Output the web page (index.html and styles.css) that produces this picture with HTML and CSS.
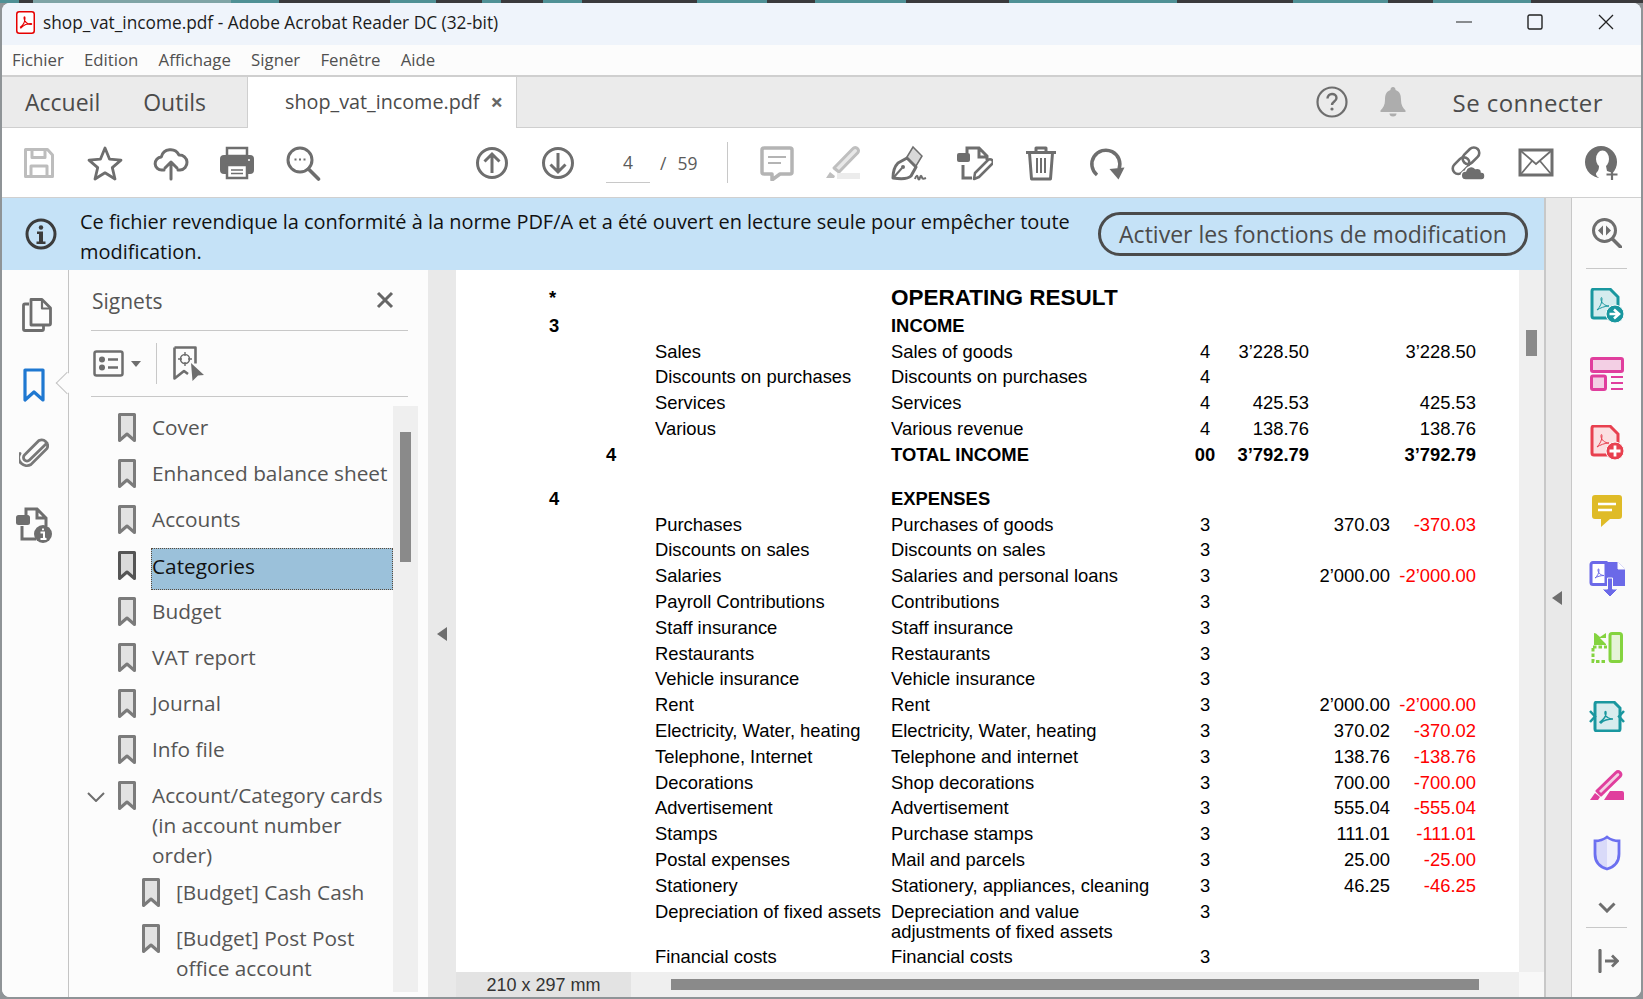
FILE: index.html
```html
<!DOCTYPE html>
<html lang="fr">
<head>
<meta charset="utf-8">
<title>shop_vat_income.pdf - Adobe Acrobat Reader DC (32-bit)</title>
<link rel="stylesheet" href="styles.css">
</head>
<body>
<svg class="defs" width="0" height="0" aria-hidden="true">
  <symbol id="bm" viewBox="0 0 18 29"><path d="M1.500 1.500h15v26L9 21l-7.500 6.500z" fill="currentColor" fill-opacity=".2" stroke="currentColor" stroke-width="3" stroke-linejoin="round"/></symbol>
</svg>
<div class="window">
  <header class="titlebar">
    <svg class="app-logo" width="19" height="23" viewBox="0 0 19 23"><rect x=".75" y=".75" width="17.500" height="21.500" rx="2.500" fill="#fff" stroke="#e60000" stroke-width="1.500"/><path d="M4 16.500c3-2 5-6 5-9.500 0-1.500-1-1.500-1 0 0 4 4 6.500 7 6.500 1 0 1-1 0-1-3.500 0-8 2-10.500 5" fill="none" stroke="#e60000" stroke-width="1.100"/></svg>
    <span class="title-text">shop_vat_income.pdf - Adobe Acrobat Reader DC (32-bit)</span>
    <div class="win-btns">
      <svg width="16" height="16" viewBox="0 0 16 16"><path d="M0 8h16" stroke="#222" stroke-width="1.200"/></svg>
      <svg width="16" height="16" viewBox="0 0 16 16"><rect x="1" y="1" width="14" height="14" rx="1.500" fill="none" stroke="#222" stroke-width="1.400"/></svg>
      <svg width="16" height="16" viewBox="0 0 16 16"><path d="M1 1l14 14M15 1L1 15" stroke="#222" stroke-width="1.300"/></svg>
    </div>
  </header>
  <nav class="menubar">
    <span>Fichier</span><span>Edition</span><span>Affichage</span><span>Signer</span><span>Fenêtre</span><span>Aide</span>
  </nav>
  <div class="tabbar">
    <span class="tab-link tab-home">Accueil</span>
    <span class="tab-link tab-tools">Outils</span>
    <div class="tab-doc"><span>shop_vat_income.pdf</span><span class="tab-x">×</span></div>
    <div class="tab-right">
      <svg class="ic-help" width="32" height="32" viewBox="0 0 32 32"><circle cx="16" cy="16" r="14.500" fill="none" stroke="#6e6e6e" stroke-width="2.200"/><path d="M11.500 12.500c0-6 9-6 9-.5 0 3.500-4.500 3.500-4.500 7" fill="none" stroke="#6e6e6e" stroke-width="2.400"/><circle cx="16" cy="23" r="1.600" fill="#6e6e6e"/></svg>
      <svg class="ic-bell" width="26" height="32" viewBox="0 0 26 32"><path d="M13 1a2.500 2.500 0 0 1 2.500 3C20 5.500 21 9 21 14c0 5 2 8 4.500 10.500v1.500H.5v-1.500C3 22 5 19 5 14 5 9 6 5.500 10.500 4A2.500 2.500 0 0 1 13 1zM9.500 27.500h7a3.500 3 0 0 1-7 0z" fill="#adadad"/></svg>
      <span class="signin">Se connecter</span>
    </div>
  </div>
  <div class="toolbar">
    <span class="tb"><svg width="36" height="36" viewBox="0 0 36 36" fill="none" stroke="#bdbdbd" stroke-width="3" stroke-linejoin="round"><path d="M4.500 4.500h22l5 5.500v21.500h-27z"/><path d="M11 4.500v8h13v-8M10 31v-10h16v10"/></svg></span>
    <span class="tb"><svg width="36" height="36" viewBox="0 0 36 36"><path d="M18 3l4.600 11.200 11.400.9-8.700 7.500 2.700 11.400-10-6.200-10 6.200 2.700-11.400L2 15.100l11.400-.9z" fill="none" stroke="#6e6e6e" stroke-width="2.800" stroke-linejoin="round"/></svg></span>
    <span class="tb"><svg width="36" height="36" viewBox="0 0 36 36" fill="none" stroke="#6e6e6e" stroke-width="3" stroke-linecap="round" stroke-linejoin="round"><path d="M11 25H9a6.500 6.500 0 0 1-.7-13A9.500 9.500 0 0 1 26 10a7.500 7.500 0 0 1 1 15h-2"/><path d="M18 34V17M12 23l6-6 6 6"/></svg></span>
    <span class="tb"><svg width="36" height="36" viewBox="0 0 36 36"><path d="M8 3h20v8H8z" fill="none" stroke="#6e6e6e" stroke-width="2.500"/><rect x="1" y="10" width="34" height="19" rx="4" fill="#6e6e6e"/><rect x="8" y="20" width="20" height="13" fill="#fff" stroke="#6e6e6e" stroke-width="2.500"/><path d="M12 25h12M12 28.500h12" stroke="#6e6e6e" stroke-width="1.600"/><circle cx="30" cy="15" r="1" fill="#fff"/></svg></span>
    <span class="tb"><svg width="36" height="36" viewBox="0 0 36 36" fill="none" stroke="#6e6e6e"><circle cx="15" cy="15" r="12" stroke-width="3"/><path d="M23.500 24l10 10" stroke-width="3.600" stroke-linecap="round"/><path d="M9.500 14.500h2M14 14.500h2M18.500 14.500h2" stroke-width="2.200"/></svg></span>
    <span class="tb tb-nav"><svg width="36" height="36" viewBox="0 0 36 36" fill="none" stroke="#6e6e6e" stroke-width="3"><circle cx="18" cy="18" r="14.500"/><path d="M18 28V9M10.500 16.500L18 9l7.500 7.500"/></svg></span>
    <span class="tb"><svg width="36" height="36" viewBox="0 0 36 36" fill="none" stroke="#6e6e6e" stroke-width="3"><circle cx="18" cy="18" r="14.500"/><path d="M18 8v19M10.500 19.500L18 27l7.500-7.500"/></svg></span>
    <div class="pager"><span class="pg-cur">4</span><span class="pg-sl">/</span><span class="pg-tot">59</span></div>
    <span class="tb-sep"></span>
    <span class="tb"><svg width="36" height="36" viewBox="0 0 36 36"><path d="M5 3h26a2 2 0 0 1 2 2v22a2 2 0 0 1-2 2H21l-8 6v-6H5a2 2 0 0 1-2-2V5a2 2 0 0 1 2-2z" fill="none" stroke="#b4b4b4" stroke-width="3.500" stroke-linejoin="round"/><path d="M9 12h18M9 18h13" stroke="#b4b4b4" stroke-width="2"/></svg></span>
    <span class="tb"><svg width="36" height="36" viewBox="0 0 36 36"><path d="M9 23L28 3.500a3 3 0 0 1 4.500 0 3 3 0 0 1 0 4.500L14 27z" fill="#e8e8e8" stroke="#bfbfbf" stroke-width="3" stroke-linejoin="round"/><path d="M1 33l4-6 5 4-1 2z" fill="#bfbfbf"/><rect x="12" y="28" width="23" height="6" fill="#ececec"/></svg></span>
    <span class="tb"><svg width="36" height="36" viewBox="0 0 36 36"><path d="M2 33c0-6 2-12 5-15l9-5 9 9-5 9c-3 3-11 3-18 2z" fill="none" stroke="#6e6e6e" stroke-width="3" stroke-linejoin="round"/><path d="M16 12l6-10 9 9-6 10z" fill="#d8d8d8" stroke="#6e6e6e" stroke-width="1.500"/><path d="M3 32l8-9" stroke="#6e6e6e" stroke-width="2"/><circle cx="12" cy="22" r="2" fill="#6e6e6e"/><path d="M24 34c1-4 2.500-4 3-1 .5 2 1.500 2 2-.5.500-2.500 1.500-2.500 2 0 .3 1.500 1.500 1.500 4 .5" fill="none" stroke="#6e6e6e" stroke-width="2"/></svg></span>
    <span class="tb"><svg width="36" height="36" viewBox="0 0 36 36" fill="none" stroke="#6e6e6e" stroke-width="3"><rect x="0" y="8" width="13" height="9" rx="2" fill="#6e6e6e" stroke="none"/><path d="M10 8V3h12l8 8v4M22 3v9h8M6 20v13h9"/><path d="M17 34l1-6 13-13a2.500 2.500 0 0 1 4 4L22 32z" stroke-width="2.500" stroke-linejoin="round"/></svg></span>
    <span class="tb"><svg width="36" height="36" viewBox="0 0 36 36" fill="none" stroke="#6e6e6e" stroke-width="3" stroke-linejoin="round"><path d="M3 7.500h30M13 7V3h10v4M6.500 8l2 26h19l2-26"/><path d="M14 13v15M18 13v15M22 13v15" stroke-width="2"/></svg></span>
    <span class="tb"><svg width="36" height="36" viewBox="0 0 36 36" fill="none" stroke="#6e6e6e" stroke-width="3.500"><path d="M8 30A14 14 0 1 1 30 24"/><path d="M20.500 24l15-1.500-6 12z" fill="#6e6e6e" stroke="none"/></svg></span>
    <div class="tb-end">
      <span class="tb"><svg class="ic-link" width="38" height="36" viewBox="0 0 38 36"><g fill="none" stroke="#6e6e6e" stroke-width="2.600" transform="rotate(-45 17 15)"><rect x="0" y="10" width="19" height="11" rx="5.500"/><rect x="14" y="10" width="19" height="11" rx="5.500"/></g><path d="M17 35a4.500 4.500 0 0 1-.5-9c1-4.500 7-6 10-2.500 3.500-1 6 1 6 3.500 2.500 0 3.500 2 3.500 4s-1.500 4-3.500 4z" fill="#6e6e6e" stroke="#fff" stroke-width="1.500"/></svg></span>
      <span class="tb"><svg width="36" height="36" viewBox="0 0 36 36" fill="none" stroke="#6e6e6e"><rect x="2" y="5" width="32" height="25" stroke-width="3"/><path d="M3 6l15 13L33 6M3 29l11-13M33 29L22 16" stroke-width="1.800"/></svg></span>
      <span class="tb"><svg width="36" height="36" viewBox="0 0 36 36"><circle cx="17" cy="17" r="16" fill="#6e6e6e"/><ellipse cx="18.500" cy="14" rx="6.500" ry="8.500" fill="#fff"/><path d="M15 21h7l1 5 9 3-6 5H17c-2-1-5-3-5-5 0-2 3-2 3-8z" fill="#fff"/><path d="M28 24v11M22.500 29.500h11" stroke="#6e6e6e" stroke-width="2.200"/></svg></span>
    </div>
  </div>
  <div class="content">
    <div class="main-col">
      <div class="banner">
        <svg class="ic-info" width="32" height="32" viewBox="0 0 32 32"><circle cx="16" cy="16" r="14" fill="none" stroke="#3c3c3c" stroke-width="3"/><circle cx="16" cy="9.500" r="2.200" fill="#3c3c3c"/><path d="M12 13.500h6v10h2.500v2.500h-9v-2.500H14v-7.500h-2z" fill="#3c3c3c"/></svg>
        <p class="banner-text">Ce fichier revendique la conformité à la norme PDF/A et a été ouvert en lecture seule pour empêcher toute modification.</p>
        <span class="banner-btn">Activer les fonctions de modification</span>
      </div>
      <div class="work">
        <aside class="rail">
          <svg class="rail-ic ic-pages" width="30" height="34" viewBox="0 0 30 34" fill="none" stroke="#6e6e6e" stroke-width="2.800" stroke-linejoin="round"><path d="M7 6H3a1.500 1.500 0 0 0-1.500 1.500V31A1.500 1.500 0 0 0 3 32.500h17a1.500 1.500 0 0 0 1.500-1.500v-4"/><path d="M9 1.500h11l8.500 8.500v15.500a1.500 1.500 0 0 1-1.500 1.500H9z"/><path d="M20 2v8.500h8" stroke-width="2.200"/></svg>
          <svg class="rail-ic ic-mark" width="22" height="35" viewBox="0 0 22 35"><path d="M2 2h18v30l-9-8-9 8z" fill="none" stroke="#1f78d1" stroke-width="3.200" stroke-linejoin="round"/></svg>
          <svg class="rail-ic ic-clip" width="30" height="32" viewBox="0 0 30 32"><path d="M28 6.500L10.500 23.500a3.500 3.500 0 0 1-5-5L20 4a6 6 0 0 1 8 8L12 28a8 8 0 0 1-11-11" transform="translate(0 .5)" fill="none" stroke="#787878" stroke-width="2.800" stroke-linecap="round"/></svg>
          <svg class="rail-ic ic-docinfo" width="36" height="36" viewBox="0 0 36 36"><g fill="none" stroke="#6e6e6e" stroke-width="3"><path d="M10 8V2h11l9 9v8M21 2v9h9M6 19v13h14"/></g><rect x="0" y="8" width="14" height="10" rx="2.500" fill="#6e6e6e"/><circle cx="27" cy="27" r="9" fill="#6e6e6e"/><path d="M27 21.500v1.800M24.500 25.500H28v6h1.500M24.500 32h6" fill="none" stroke="#fff" stroke-width="2"/></svg>
          <span class="rail-notch"></span>
        </aside>
        <section class="panel">
          <div class="panel-head">
            <span class="panel-title">Signets</span>
            <svg width="18" height="18" viewBox="0 0 18 18"><path d="M2 2l14 14M16 2L2 16" stroke="#666" stroke-width="3"/></svg>
          </div>
          <div class="panel-tools">
            <svg width="31" height="27" viewBox="0 0 31 27"><rect x="1.500" y="1.500" width="28" height="24" rx="2" fill="none" stroke="#6e6e6e" stroke-width="2.500"/><circle cx="9" cy="9.500" r="3" fill="#6e6e6e"/><circle cx="9" cy="17.500" r="3" fill="#6e6e6e"/><path d="M15 9.500h10M15 17.500h10" stroke="#6e6e6e" stroke-width="2.500"/></svg>
            <span class="caret"></span>
            <span class="panel-sep"></span>
            <svg width="31" height="35" viewBox="0 0 31 35"><path d="M1.500 1.500h21v16M1.500 1.500v31l9.500-7.500 4 3" fill="none" stroke="#6e6e6e" stroke-width="2.600" stroke-linejoin="round"/><circle cx="12" cy="13" r="4.500" fill="none" stroke="#6e6e6e" stroke-width="1.600"/><path d="M12 6v4M12 16v4M5 13h4M15 13h4" stroke="#6e6e6e" stroke-width="1.400"/><path d="M18 17l13 12-6 .5-5.500 5.500z" fill="#6e6e6e"/></svg>
          </div>
          <div class="bm-area">
            <ul class="bm-list">
              <li class="bm"><span class="tw"></span><svg class="bm-ic"><use href="#bm"/></svg><span class="bm-t">Cover</span></li>
              <li class="bm"><span class="tw"></span><svg class="bm-ic"><use href="#bm"/></svg><span class="bm-t">Enhanced balance sheet</span></li>
              <li class="bm"><span class="tw"></span><svg class="bm-ic"><use href="#bm"/></svg><span class="bm-t">Accounts</span></li>
              <li class="bm bm-sel"><span class="tw"></span><svg class="bm-ic"><use href="#bm"/></svg><span class="bm-t">Categories</span></li>
              <li class="bm"><span class="tw"></span><svg class="bm-ic"><use href="#bm"/></svg><span class="bm-t">Budget</span></li>
              <li class="bm"><span class="tw"></span><svg class="bm-ic"><use href="#bm"/></svg><span class="bm-t">VAT report</span></li>
              <li class="bm"><span class="tw"></span><svg class="bm-ic"><use href="#bm"/></svg><span class="bm-t">Journal</span></li>
              <li class="bm"><span class="tw"></span><svg class="bm-ic"><use href="#bm"/></svg><span class="bm-t">Info file</span></li>
              <li class="bm bm-open"><span class="tw"><svg width="18" height="10" viewBox="0 0 18 10"><path d="M1 1l8 8 8-8" fill="none" stroke="#6e6e6e" stroke-width="2"/></svg></span><svg class="bm-ic"><use href="#bm"/></svg><span class="bm-t">Account/Category cards (in account number order)</span></li>
              <li class="bm bm-sub"><span class="tw"></span><svg class="bm-ic"><use href="#bm"/></svg><span class="bm-t">[Budget] Cash Cash</span></li>
              <li class="bm bm-sub"><span class="tw"></span><svg class="bm-ic"><use href="#bm"/></svg><span class="bm-t">[Budget] Post Post office account</span></li>
            </ul>
            <div class="bm-track"><span class="bm-thumb"></span></div>
          </div>
        </section>
        <div class="gutter"><span class="arrow"></span></div>
        <section class="viewer">
          <div class="viewer-top">
            <div class="page">
              <div class="r r-h"><b>*</b><span></span><span></span><b class="big">OPERATING RESULT</b></div>
              <div class="r"><b>3</b><span></span><span></span><b>INCOME</b></div>
              <div class="r"><span></span><span></span><span>Sales</span><span>Sales of goods</span><span class="c">4</span><span class="n">3’228.50</span><span></span><span class="n">3’228.50</span></div>
              <div class="r"><span></span><span></span><span>Discounts on purchases</span><span>Discounts on purchases</span><span class="c">4</span></div>
              <div class="r"><span></span><span></span><span>Services</span><span>Services</span><span class="c">4</span><span class="n">425.53</span><span></span><span class="n">425.53</span></div>
              <div class="r"><span></span><span></span><span>Various</span><span>Various revenue</span><span class="c">4</span><span class="n">138.76</span><span></span><span class="n">138.76</span></div>
              <div class="r r-b"><span></span><span>4</span><span></span><span>TOTAL INCOME</span><span class="c">00</span><span class="n">3’792.79</span><span></span><span class="n">3’792.79</span></div>
              <div class="r-gap"></div>
              <div class="r"><b>4</b><span></span><span></span><b>EXPENSES</b></div>
              <div class="r"><span></span><span></span><span>Purchases</span><span>Purchases of goods</span><span class="c">3</span><span></span><span class="n">370.03</span><span class="n neg">-370.03</span></div>
              <div class="r"><span></span><span></span><span>Discounts on sales</span><span>Discounts on sales</span><span class="c">3</span></div>
              <div class="r"><span></span><span></span><span>Salaries</span><span>Salaries and personal loans</span><span class="c">3</span><span></span><span class="n">2’000.00</span><span class="n neg">-2’000.00</span></div>
              <div class="r"><span></span><span></span><span>Payroll Contributions</span><span>Contributions</span><span class="c">3</span></div>
              <div class="r"><span></span><span></span><span>Staff insurance</span><span>Staff insurance</span><span class="c">3</span></div>
              <div class="r"><span></span><span></span><span>Restaurants</span><span>Restaurants</span><span class="c">3</span></div>
              <div class="r"><span></span><span></span><span>Vehicle insurance</span><span>Vehicle insurance</span><span class="c">3</span></div>
              <div class="r"><span></span><span></span><span>Rent</span><span>Rent</span><span class="c">3</span><span></span><span class="n">2’000.00</span><span class="n neg">-2’000.00</span></div>
              <div class="r"><span></span><span></span><span>Electricity, Water, heating</span><span>Electricity, Water, heating</span><span class="c">3</span><span></span><span class="n">370.02</span><span class="n neg">-370.02</span></div>
              <div class="r"><span></span><span></span><span>Telephone, Internet</span><span>Telephone and internet</span><span class="c">3</span><span></span><span class="n">138.76</span><span class="n neg">-138.76</span></div>
              <div class="r"><span></span><span></span><span>Decorations</span><span>Shop decorations</span><span class="c">3</span><span></span><span class="n">700.00</span><span class="n neg">-700.00</span></div>
              <div class="r"><span></span><span></span><span>Advertisement</span><span>Advertisement</span><span class="c">3</span><span></span><span class="n">555.04</span><span class="n neg">-555.04</span></div>
              <div class="r"><span></span><span></span><span>Stamps</span><span>Purchase stamps</span><span class="c">3</span><span></span><span class="n">111.01</span><span class="n neg">-111.01</span></div>
              <div class="r"><span></span><span></span><span>Postal expenses</span><span>Mail and parcels</span><span class="c">3</span><span></span><span class="n">25.00</span><span class="n neg">-25.00</span></div>
              <div class="r"><span></span><span></span><span>Stationery</span><span>Stationery, appliances, cleaning</span><span class="c">3</span><span></span><span class="n">46.25</span><span class="n neg">-46.25</span></div>
              <div class="r r-wrap"><span></span><span></span><span>Depreciation of fixed assets</span><span>Depreciation and value<br>adjustments of fixed assets</span><span class="c">3</span></div>
              <div class="r"><span></span><span></span><span>Financial costs</span><span>Financial costs</span><span class="c">3</span></div>
            </div>
            <div class="vscroll"><span class="vthumb"></span></div>
          </div>
          <div class="viewer-bottom">
            <span class="page-size">210 x 297 mm</span>
            <div class="hscroll"><span class="hthumb"></span></div>
            <span class="corner"></span>
          </div>
        </section>
      </div>
    </div>
    <div class="gutter gutter-r"><span class="arrow"></span></div>
    <aside class="tools">
      <div class="tools-head"><svg width="30" height="30" viewBox="0 0 30 30"><circle cx="12.500" cy="12.500" r="11" fill="none" stroke="#6e6e6e" stroke-width="3"/><path d="M20.500 21l8 8" stroke="#6e6e6e" stroke-width="3.500" stroke-linecap="round"/><path d="M11 7.500v10l-5-5zM14 7.500v10l5-5z" fill="#6e6e6e"/></svg></div>
      <div class="tool"><svg width="34" height="35" viewBox="0 0 34 35"><path d="M2 3a2 2 0 0 1 2-2h16l8 8v19a2 2 0 0 1-2 2H4a2 2 0 0 1-2-2z" fill="#d4ecee" stroke="#19979f" stroke-width="3"/><path d="M7 22c3-3 5-7 5-11 0-2-1-2-1 0 0 4 4 7 8 7-4 0-9 2-12 4z" fill="none" stroke="#19979f" stroke-width="1"/><circle cx="25" cy="26" r="9" fill="#19979f" stroke="#fafafa" stroke-width="1"/><path d="M19.500 26h8M24 21.500l5 4.500-5 4.500" fill="none" stroke="#fff" stroke-width="2.600"/></svg></div>
      <div class="tool"><svg width="34" height="34" viewBox="0 0 34 34" fill="#f3cfe4" stroke="#e03e9d" stroke-width="3"><rect x="1.500" y="1.500" width="31" height="13" rx="1.500"/><rect x="1.500" y="19" width="14" height="13.500" rx="1.500"/><path d="M21 20h12M21 26h12M21 32h12" stroke-width="1.800" fill="none"/></svg></div>
      <div class="tool"><svg width="34" height="35" viewBox="0 0 34 35"><path d="M2 3a2 2 0 0 1 2-2h16l8 8v19a2 2 0 0 1-2 2H4a2 2 0 0 1-2-2z" fill="#fbdfe1" stroke="#e8404f" stroke-width="3"/><path d="M7 22c3-3 5-7 5-11 0-2-1-2-1 0 0 4 4 7 8 7-4 0-9 2-12 4z" fill="none" stroke="#e8404f" stroke-width="1"/><circle cx="25" cy="26" r="9" fill="#e8404f" stroke="#fafafa" stroke-width="1"/><path d="M25 20.500v11M19.500 26h11" stroke="#fff" stroke-width="2.800"/></svg></div>
      <div class="tool"><svg width="30" height="32" viewBox="0 0 30 32"><path d="M3 0h24a3 3 0 0 1 3 3v18a3 3 0 0 1-3 3H18l-9 8v-8H3a3 3 0 0 1-3-3V3a3 3 0 0 1 3-3z" fill="#dfbb27"/><path d="M6 9h18M6 15h14" stroke="#fff" stroke-width="2.600"/></svg></div>
      <div class="tool"><svg width="36" height="36" viewBox="0 0 36 36"><path d="M18 1h11l7 7v17H18z" fill="#6b69e8"/><path d="M29 1v7h7" fill="#fff" stroke="#fafafa" stroke-width="1"/><path d="M2 3.500a2 2 0 0 1 2-2h13v22H4a2 2 0 0 1-2-2z" fill="#fff" stroke="#6b69e8" stroke-width="3"/><path d="M6 17c2.500-2 4-5 4-8 0-1.500-1-1.500-1 0 0 3 3 5.500 6 5.500-3 0-7 1-9 2.500z" fill="none" stroke="#6b69e8"/><path d="M18.500 17h5v11H29l-8 8-8-8h5.500z" fill="#6b69e8" stroke="#fafafa"/></svg></div>
      <div class="tool"><svg width="32" height="31" viewBox="0 0 32 31"><rect x="19" y="1.500" width="11.500" height="28" rx="2" fill="#e6f3d8" stroke="#84d33f" stroke-width="3"/><path d="M2 16v13.500h14M2 15h14" fill="none" stroke="#84d33f" stroke-width="3" stroke-dasharray="3.500 2"/><path d="M15 1v5H9l6 6v1H3V1l2 .5L9 5z" fill="#84d33f"/></svg></div>
      <div class="tool"><svg width="36" height="31" viewBox="0 0 36 31"><path d="M6 3a2 2 0 0 1 2-2h17l6 6v21a2 2 0 0 1-2 2H8a2 2 0 0 1-2-2z" fill="#d7ecee" stroke="#19979f" stroke-width="3"/><path d="M11 21c3-2 6-5 6-9 0-2-1-2-1 0 0 4 4 6 8 6-4 0-9 1-12 4z" fill="none" stroke="#19979f" stroke-width="1.500"/><path d="M1 10l5 5.500-5 5.500" fill="none" stroke="#19979f" stroke-width="2.500"/><path d="M35 10l-5 5.500 5 5.500" fill="none" stroke="#19979f" stroke-width="2.500"/></svg></div>
      <div class="tool"><svg width="34" height="30" viewBox="0 0 34 30"><path d="M7 21L26 2.500a3 3 0 0 1 4 0 3 3 0 0 1 0 4L11 25z" fill="#f3cfe4" stroke="#e03e9d" stroke-width="3" stroke-linejoin="round"/><path d="M0 30l5-7 5 4-2 3z" fill="#e03e9d"/><path d="M14 30l6-9h12a2 2 0 0 1 2 2v7z" fill="#e03e9d"/></svg></div>
      <div class="tool"><svg width="28" height="36" viewBox="0 0 28 36"><path d="M14 3c-4 3-8 4-11 4v12c0 7 4 12 11 14z" fill="#d9daf9"/><path d="M14 3c4 3 8 4 11 4v12c0 7-4 12-11 14z" fill="#eeeefc"/><path d="M14 2c4 3 8 4 12 4v13c0 8-5 13-12 15C7 32 2 27 2 19V6c4 0 8-1 12-4z" fill="none" stroke="#6b6ff0" stroke-width="2.800"/></svg></div>
      <div class="tools-more"><svg width="18" height="11" viewBox="0 0 18 11"><path d="M1.500 1.500L9 9l7.500-7.500" fill="none" stroke="#6e6e6e" stroke-width="3"/></svg></div>
      <div class="tools-foot"><svg width="21" height="24" viewBox="0 0 21 24"><path d="M2 1.500v21" stroke="#6e6e6e" stroke-width="3.200" stroke-linecap="round"/><path d="M7 12h12M14 6.500l5.500 5.500L14 17.500" fill="none" stroke="#6e6e6e" stroke-width="2.800"/></svg></div>
    </aside>
  </div>
</div>
</body>
</html>
```
FILE: styles.css
```css
* { box-sizing: border-box; }
html, body { height: 100%; }
body {
  margin: 0;
  overflow: hidden;
  font-family: "Open Sans", "Noto Sans", sans-serif;
  background-color: #8f9497;
  background-image: linear-gradient(90deg, #4f9095 0 19px, #3a3a3c 19px 33px, #7fa4a6 33px 231px, #4f9095 231px 279px, #3a3a3c 279px 390px, #4f9095 390px 436px, #3a3a3c 436px 482px, #4f9095 482px 501px, #3a3a3c 501px 543px, #4f9095 543px 582px, #3a3a3c 582px 697px, #4f9095 697px 767px, #3a3a3c 767px 815px, #4f9095 815px 906px, #3a3a3c 906px 1009px, #4f9095 1009px 1177px, #3a3a3c 1177px 1293px, #4f9095 1293px 1388px, #3a3a3c 1388px 1433px, #4f9095 1433px 1531px, #3a3a3c 1531px 1643px);
  background-size: 100% 3px;
  background-repeat: no-repeat;
}
.defs { position: absolute; }
.window {
  margin: 3px 2px 2px;
  height: 994px;
  border-radius: 8px;
  overflow: hidden;
  display: flex;
  flex-direction: column;
  background: #fff;
}
.titlebar {
  height: 42px;
  flex: none;
  display: flex;
  align-items: center;
  padding: 0 27px 4px 14px;
  background: #eff4fb;
  color: #1c1c1c;
  font-size: 17.300px;
}
.app-logo { margin-right: 8px; }
.win-btns { margin-left: auto; display: flex; gap: 55px; }
.menubar {
  height: 30px;
  flex: none;
  display: flex;
  align-items: center;
  background: #fcfcfc;
  padding: 0 0 2px 10px;
  gap: 20.200px;
  color: #505050;
  font-size: 16.800px;
}
.tabbar {
  height: 53px;
  flex: none;
  display: flex;
  align-items: center;
  background: #ebebeb;
  border-top: 2px solid #cfcfcf;
  border-bottom: 1px solid #cfcfcf;
  color: #4b4b4b;
  font-size: 23px;
}
.tab-home { margin-left: 23px; }
.tab-tools { margin-left: 43px; }
.tab-doc {
  align-self: stretch;
  margin: 0 0 -1px 41px;
  width: 270px;
  background: #fff;
  border-left: 1px solid #cfcfcf;
  border-right: 1px solid #cfcfcf;
  display: flex;
  align-items: center;
  padding: 0 0 3px 37px;
  font-size: 19.750px;
}
.tab-x { margin-left: 11px; font-weight: 700; color: #666; font-size: 22px; }
.tab-right { margin-left: auto; display: flex; align-items: center; padding-right: 38px; }
.ic-bell { margin-left: 32px; }
.signin { margin-left: 47px; font-size: 24px; font-weight: 500; letter-spacing: .45px; }
.toolbar {
  height: 70px;
  flex: none;
  display: flex;
  align-items: center;
  padding-left: 4px;
  background: #fff;
  border-bottom: 1px solid #d0d0d0;
}
.tb { width: 66px; height: 36px; flex: none; display: flex; justify-content: center; }
.tb-nav { margin-left: 123px; }
.ic-link { flex: none; margin-left: -5px; }
.pager { width: 136px; flex: none; display: flex; align-items: center; color: #5a5a5a; font-size: 17.500px; height: 41px; }
.pg-cur { width: 44px; margin-left: 15px; align-self: stretch; display: flex; align-items: center; justify-content: center; border-bottom: 1px solid #c8c8c8; }
.pg-sl { margin-left: 10px; }
.pg-tot { margin-left: 11px; }
.tb-sep { width: 1px; height: 41px; background: #c8c8c8; margin-right: 16px; flex: none; }
.tb-end { margin-left: auto; display: flex; padding-right: 6px; }
.content { flex: 1; min-height: 0; display: flex; }
.main-col { flex: 1; min-width: 0; display: flex; flex-direction: column; }
.banner {
  height: 72px;
  flex: none;
  display: flex;
  align-items: center;
  background: #c5e2f7;
  padding-left: 23px;
}
.banner-text {
  margin: 6px 0 0 23px;
  width: 992px;
  font-size: 19.960px;
  line-height: 30px;
  color: #111;
}
.banner-btn {
  margin-left: 26px;
  width: 430px;
  height: 44px;
  border: 3px solid #4b4b4b;
  border-radius: 22px;
  display: flex;
  align-items: center;
  justify-content: center;
  color: #4b4b4b;
  font-size: 23px;
  font-weight: 500;
  white-space: nowrap;
}
.work { flex: 1; min-height: 0; display: flex; }
.rail {
  width: 67px;
  flex: none;
  position: relative;
  background: #fcfcfc;
  border-right: 1px solid #c4c4c4;
  display: flex;
  flex-direction: column;
}
.rail-ic { flex: none; }
.ic-pages { margin: 28px 0 0 20px; }
.ic-mark { margin: 36px 0 0 21px; }
.ic-clip { margin: 33px 0 0 17px; }
.ic-docinfo { margin: 39px 0 0 14px; }
.rail-notch {
  position: absolute;
  left: 57px;
  top: 105px;
  width: 16px;
  height: 16px;
  background: #fcfcfc;
  border-left: 1px solid #c4c4c4;
  border-bottom: 1px solid #c4c4c4;
  transform: rotate(45deg);
}
.panel {
  width: 359px;
  flex: none;
  background: #fcfcfc;
  padding: 0 20px 0 22px;
  display: flex;
  flex-direction: column;
  color: #505050;
}
.panel-head {
  height: 61px;
  flex: none;
  display: flex;
  align-items: center;
  justify-content: space-between;
  padding: 0 14px 0 1px;
  border-bottom: 1px solid #c8c8c8;
}
.panel-title { font-size: 21px; color: #555; padding-top: 2px; }
.panel-tools {
  height: 66px;
  flex: none;
  display: flex;
  align-items: center;
  padding-left: 2px;
  border-bottom: 1px solid #c8c8c8;
}
.caret { margin-left: 7px; border: 5px solid transparent; border-top: 6px solid #6e6e6e; border-bottom: 0; }
.panel-sep { width: 1px; height: 41px; background: #c8c8c8; margin: 0 16px 0 15px; }
.bm-area { flex: 1; min-height: 0; display: flex; margin: 0 -11px 0 -9px; }
.bm-list { list-style: none; margin: 0; padding: 8px 0 0; width: 311px; flex: none; overflow: hidden; }
.bm { display: flex; align-items: flex-start; padding: 7px 0 9px; color: #555; font-size: 20.800px; line-height: 30px; }
.tw { width: 36px; flex: none; padding: 12px 0 0 5px; display: flex; }
.bm-ic { width: 18px; height: 29px; flex: none; margin: 1px 16px 0 0; color: #7b7b7b; }
.bm-t { flex: 1; min-width: 0; }
.bm-sel .bm-t {
  margin: -2px 0 -10px -1px;
  padding: 2px 0 8px;
  background: #9bc1da;
  border: 1px dotted #5b4a3a;
  color: #111;
}
.bm-sel .bm-ic { color: #555; }
.bm-open { margin-bottom: -9px; }
.bm-sub { padding-left: 24px; }
.bm-track { width: 25px; flex: none; margin: 9px 0 5px; background: #efefef; padding: 26px 7px 0; }
.bm-thumb { display: block; width: 11px; height: 130px; background: #8a8a8a; }
.gutter {
  width: 28px;
  flex: none;
  background: #e9e9e9;
  display: flex;
  align-items: center;
  justify-content: center;
}
.arrow { border: 7px solid transparent; border-right: 10px solid #6e6e6e; border-left: 0; }
.gutter-r { border-left: 2px solid #c8c8c8; border-right: 1px solid #c8c8c8; padding-right: 3px; }
.viewer { flex: 1; min-width: 0; display: flex; flex-direction: column; }
.viewer-top { flex: 1; min-height: 0; display: flex; }
.page {
  flex: 1;
  min-width: 0;
  overflow: hidden;
  background: #fff;
  padding: 12px 0 0 93px;
  color: #000;
  font-family: "Liberation Sans", Arial, sans-serif;
  font-size: 18.400px;
}
.r {
  display: grid;
  grid-template-columns: 57px 49px 236px 289px 50px 79px 81px 86px;
  height: 25.800px;
  align-items: center;
  white-space: nowrap;
}
.r-h { height: 31px; }
.big { font-size: 22.500px; }
.r-b { font-weight: 700; }
.r-gap { height: 18.200px; }
.r-wrap { height: 45.800px; align-items: start; padding-top: 3px; line-height: 20px; }
.c { text-align: center; }
.n { text-align: right; }
.neg { color: #f00; }
.vscroll { width: 25px; flex: none; background: #efefef; padding: 60px 7px 0; }
.vthumb { display: block; width: 11px; height: 26px; background: #8a8a8a; }
.viewer-bottom { height: 25px; flex: none; display: flex; background: #efefef; }
.page-size { width: 175px; flex: none; background: #e3e3e3; color: #333; font-family: "Liberation Sans", Arial, sans-serif; font-size: 18px; display: flex; align-items: center; justify-content: center; padding-top: 1px; }
.hscroll { flex: 1; padding: 7px 0 0 40px; }
.hthumb { display: block; width: 808px; height: 11px; background: #8a8a8a; }
.corner { width: 25px; flex: none; background: #f8f8f8; }
.tools {
  width: 69px;
  flex: none;
  background: #fafafa;
  display: flex;
  flex-direction: column;
  align-items: stretch;
}
.tools-head {
  height: 71px;
  margin: 0 14px 2px;
  flex: none;
  display: flex;
  align-items: center;
  justify-content: center;
  border-bottom: 1px solid #c8c8c8;
}
.tool { height: 68.500px; flex: none; display: flex; align-items: center; justify-content: center; }
.tools-more { height: 40px; flex: none; margin: 0 14px; display: flex; align-items: center; justify-content: center; border-bottom: 1px solid #c8c8c8; }
.tools-foot { flex: 1; display: flex; align-items: flex-start; justify-content: center; padding: 21px 0 0 3px; }
```
